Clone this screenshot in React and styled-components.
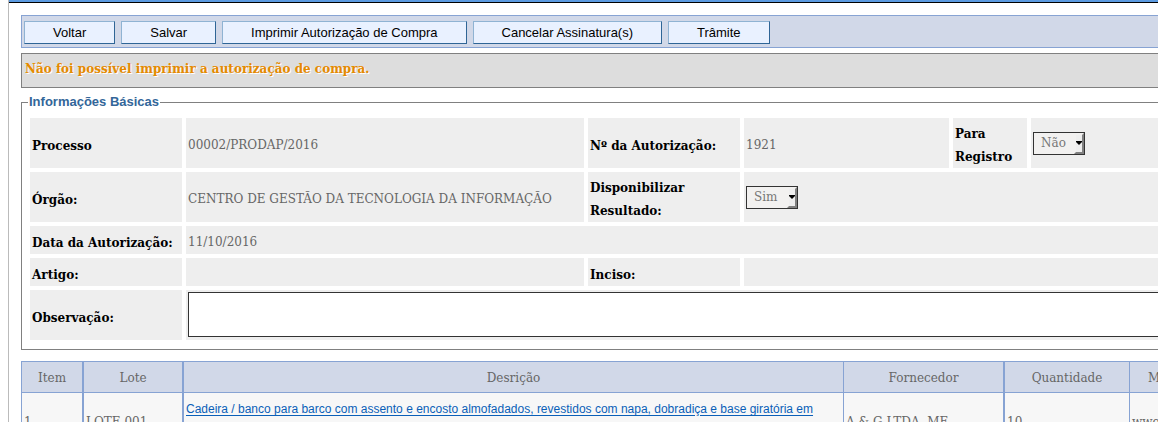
import React from "react";
import styled, { createGlobalStyle } from "styled-components";

const serif = `"DejaVu Serif", serif`;
const sans = `"Liberation Sans", Arial, sans-serif`;

const GlobalStyle = createGlobalStyle`
  *, *::before, *::after { box-sizing: border-box; }
  body {
    margin: 0;
    background: #fff;
    color: #666;
    font: 12px/23px ${serif};
  }
`;

const Page = styled.div`
  height: 100vh;
  padding-left: 8px;
  overflow: hidden;
`;

const Frame = styled.div`
  min-height: 100%;
  margin-right: -48px;
  border-left: 1px solid #bbb;
`;

const TopBar = styled.header`
  height: 3px;
  background: #5b9ae0;
  border-bottom: 1px solid #000;
`;

const Content = styled.main`
  padding: 12px 0 0 12px;
`;

const Toolbar = styled.div`
  display: flex;
  gap: 6px;
  padding: 5px 2px 3px;
  background: #d1d8e8;
  border: 1px solid #87a3d3;
`;

const ToolButton = styled.button`
  height: 23px;
  padding: 0 28px;
  border: 1px solid;
  border-color: #8fb3d3 #2f6596 #2f6596 #8fb3d3;
  background: #e9f1ff;
  color: #000;
  font: 13px/21px ${sans};
  white-space: nowrap;
`;

const Message = styled.p`
  height: 35px;
  margin: 5px 0 0;
  padding: 4px 3px;
  border: 1px solid #808080;
  background: #ddd;
  color: #e68a00;
  font-weight: bold;
  text-shadow: 1px 1px 0 #fff;
`;

const Fieldset = styled.fieldset`
  min-width: 0;
  margin: 6px 0 0;
  padding: 8px 8px 9px;
  border: 1px solid #808080;
`;

const Legend = styled.legend`
  margin-left: -2px;
  padding: 0 1px;
  color: #336699;
  font: bold 13px/16px ${sans};
`;

const FormGrid = styled.div`
  display: grid;
  grid-template-columns:
    152px minmax(0, 398fr) 152px minmax(0, 205fr) 74px minmax(0, 166fr);
  grid-template-rows: 50px 50px 28px 28px 50px;
  gap: 4px;
`;

const Cell = styled.div`
  display: flex;
  align-items: center;
  grid-column: span ${(p) => p.$span || 1};
  padding: 2px;
  background: #eee;
`;

const ValueCell = styled(Cell)`
  padding: 4px 2px 0;
`;

const LabelCell = styled(Cell)`
  padding: 6px 2px 0;
  color: #000;
  font-weight: bold;
`;

const NotesCell = styled(Cell)`
  align-items: flex-start;
`;

const SelectBox = styled.span`
  position: relative;
  display: block;
  width: 52px;
  height: 23px;
`;

const Select = styled.select`
  appearance: none;
  width: 100%;
  height: 100%;
  padding: 0 0 0 7px;
  border: 1px solid #333;
  border-radius: 0;
  background: #f2f1f0;
  color: #777;
  font: 12px/18px ${serif};
`;

const SelectArrow = styled.span`
  position: absolute;
  top: 1px;
  right: 1px;
  bottom: 1px;
  display: flex;
  align-items: center;
  width: 10px;
  border: 2px solid;
  border-color: #f2f1f0 #808080 #808080 #f2f1f0;
  background: #eee;
  pointer-events: none;

  svg {
    flex: none;
  }
`;

const Notes = styled.textarea`
  display: block;
  width: 100%;
  height: 45px;
  padding: 2px;
  border: 1px solid #333;
  background: #fff;
  color: #666;
  font: 12px/18px ${serif};
  resize: none;
`;

const Items = styled.table`
  width: 100%;
  margin-top: 11px;
  border-collapse: separate;
  border-spacing: 0;
  table-layout: fixed;
  border-top: 1px solid #87a3d3;
  border-left: 1px solid #87a3d3;
`;

const Col = styled.col`
  width: ${(p) => p.$width};
`;

const HeadCell = styled.th`
  height: 31px;
  padding: 2px 0 0;
  border: 0 solid #87a3d3;
  border-bottom-width: 1px;
  border-right-width: ${(p) => (p.$double ? 2 : 1)}px;
  background: #d1d8e8;
  font-weight: normal;
`;

const BodyCell = styled.td`
  height: 58px;
  padding: 4px 2px 2px;
  border: 0 solid #87a3d3;
  border-bottom-width: 1px;
  border-right-width: ${(p) => (p.$double ? 2 : 1)}px;
  background: #f7f7f7;
  vertical-align: ${(p) => (p.$top ? "top" : "middle")};
`;

const ItemLink = styled.a`
  display: inline-block;
  padding-top: 1px;
  color: #0a5fb8;
  font: 12px/23px ${sans};
  text-decoration: underline;
  text-underline-offset: 2px;
  white-space: nowrap;
`;

function Dropdown({ id, value, other }) {
  return (
    <SelectBox>
      <Select id={id} defaultValue={value}>
        <option>{value}</option>
        <option>{other}</option>
      </Select>
      <SelectArrow>
        <svg width="6" height="4" viewBox="0 0 6 4" aria-hidden="true">
          <path d="M0 0h6v1L3 4L0 1z" fill="#000" />
        </svg>
      </SelectArrow>
    </SelectBox>
  );
}

const actions = [
  "Voltar",
  "Salvar",
  "Imprimir Autorização de Compra",
  "Cancelar Assinatura(s)",
  "Trâmite",
];

const columns = [
  { title: "Item", width: "62px", double: true, value: "1" },
  { title: "Lote", width: "100px", double: true, value: "LOTE 001" },
  {
    title: "Desrição",
    width: "auto",
    link: true,
    value:
      "Cadeira / banco para barco com assento e encosto almofadados, revestidos com napa, dobradiça e base giratória em",
  },
  { title: "Fornecedor", width: "161px", double: true, value: "A & G LTDA. ME" },
  { title: "Quantidade", width: "125px", value: "10" },
  { title: "Marca", width: "76px", value: "wwe" },
];

export default function App() {
  return (
    <Page>
      <GlobalStyle />
      <Frame>
        <TopBar />
        <Content>
          <Toolbar>
            {actions.map((name) => (
              <ToolButton key={name} type="button">
                {name}
              </ToolButton>
            ))}
          </Toolbar>
          <Message role="alert">
            Não foi possível imprimir a autorização de compra.
          </Message>
          <Fieldset>
            <Legend>Informações Básicas</Legend>
            <FormGrid>
              <LabelCell>Processo</LabelCell>
              <ValueCell>00002/PRODAP/2016</ValueCell>
              <LabelCell>Nº da Autorização:</LabelCell>
              <ValueCell>1921</ValueCell>
              <LabelCell as="label" htmlFor="registro">
                Para Registro
              </LabelCell>
              <Cell>
                <Dropdown id="registro" value="Não" other="Sim" />
              </Cell>

              <LabelCell>Órgão:</LabelCell>
              <ValueCell>CENTRO DE GESTÃO DA TECNOLOGIA DA INFORMAÇÃO</ValueCell>
              <LabelCell as="label" htmlFor="resultado">
                Disponibilizar Resultado:
              </LabelCell>
              <Cell $span={3}>
                <Dropdown id="resultado" value="Sim" other="Não" />
              </Cell>

              <LabelCell>Data da Autorização:</LabelCell>
              <ValueCell $span={5}>11/10/2016</ValueCell>

              <LabelCell>Artigo:</LabelCell>
              <ValueCell />
              <LabelCell>Inciso:</LabelCell>
              <ValueCell $span={3} />

              <LabelCell as="label" htmlFor="observacao">
                Observação:
              </LabelCell>
              <NotesCell $span={5}>
                <Notes id="observacao" />
              </NotesCell>
            </FormGrid>
          </Fieldset>
          <Items>
            <colgroup>
              {columns.map((c) => (
                <Col key={c.title} $width={c.width} />
              ))}
            </colgroup>
            <thead>
              <tr>
                {columns.map((c) => (
                  <HeadCell key={c.title} $double={c.double} scope="col">
                    {c.title}
                  </HeadCell>
                ))}
              </tr>
            </thead>
            <tbody>
              <tr>
                {columns.map((c) => (
                  <BodyCell key={c.title} $double={c.double} $top={c.link}>
                    {c.link ? <ItemLink href="#item">{c.value}</ItemLink> : c.value}
                  </BodyCell>
                ))}
              </tr>
            </tbody>
          </Items>
        </Content>
      </Frame>
    </Page>
  );
}
